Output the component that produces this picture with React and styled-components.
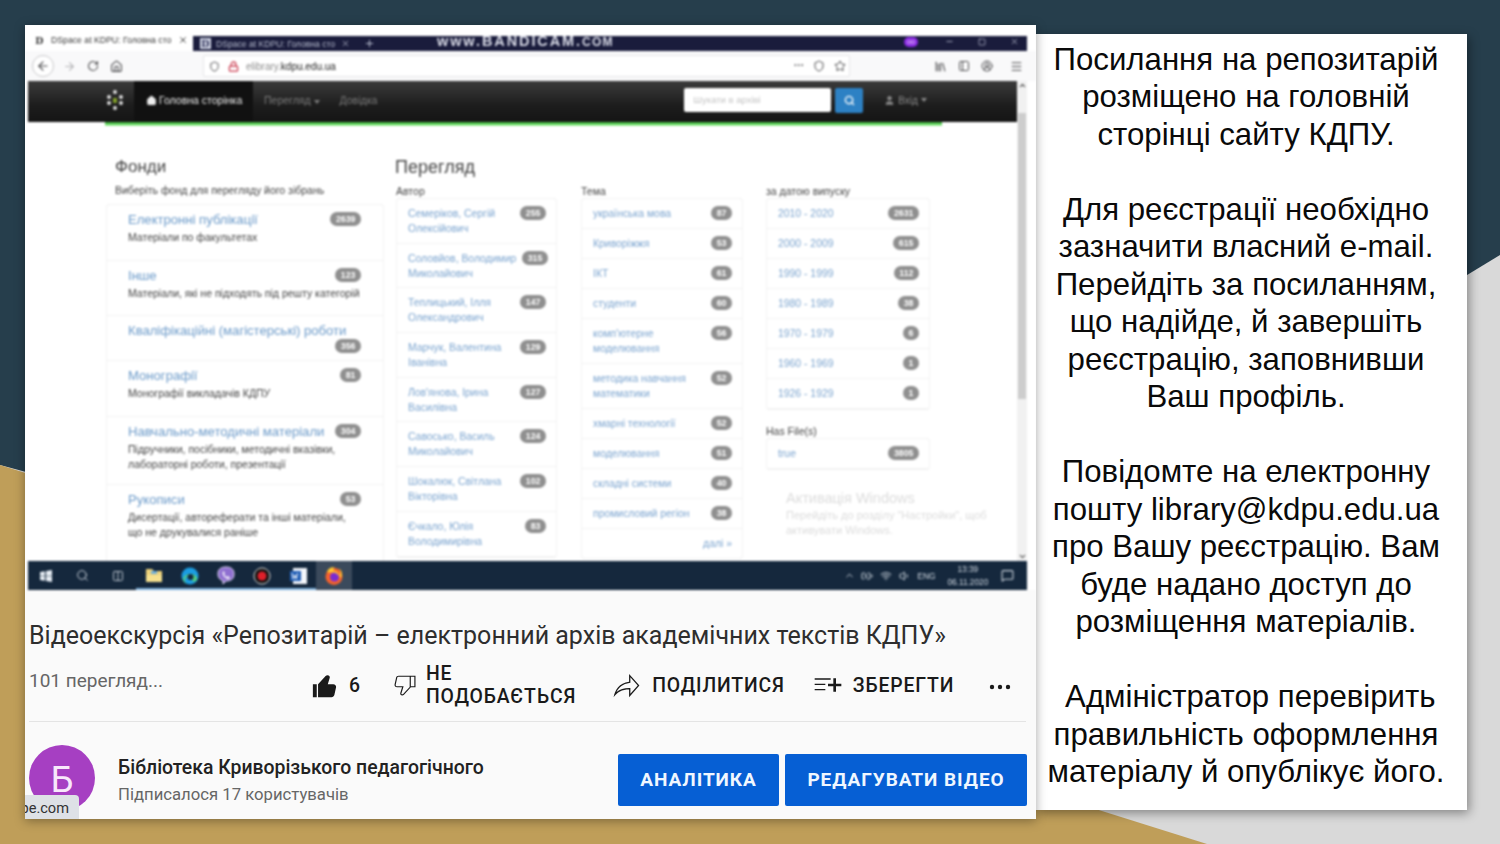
import React from "react";
import styled, { createGlobalStyle } from "styled-components";
import { ArrowLeft, ArrowRight, RotateCw, Home, Shield, Lock, Star, Search, User, X, Plus, Minus, Square, Menu, Library, PanelLeft, CircleUserRound, ChevronUp, ChevronDown, Wifi, Volume1, BatteryCharging, MessageSquare, Search as SearchSmall, Columns2 } from "lucide-react";

const Global = createGlobalStyle`
  html, body { margin: 0; padding: 0; width: 1500px; height: 844px; overflow: hidden; }
  * { box-sizing: border-box; }
`;

const Stage = styled.div`
  position: relative; width: 1500px; height: 844px; overflow: hidden; background: #d9d9d9;
`;
const Dark = styled.div`
  position: absolute; inset: 0; background: #263e4c;
  clip-path: polygon(0 0, 1500px 0, 1500px 255px, 800px 680px, 0 465px);
`;
const Gold = styled.div`
  position: absolute; inset: 0; background: #bf9e59;
  clip-path: polygon(0 465px, 1207px 844px, 0 844px);
`;
const Slide = styled.div`
  position: relative; display: flex; align-items: flex-start; padding: 25px 0 0 25px;
`;
const LeftCard = styled.div`
  position: relative; width: 1011px; height: 794px; background: #fafafa; overflow: hidden;
  box-shadow: 0 2px 10px rgba(0,0,0,.35);
`;
const RightCard = styled.div`
  width: 431px; height: 776px; margin-top: 9px; background: #fff; padding: 6.5px 11px 0 0;
  box-shadow: 2px 3px 10px rgba(0,0,0,.4);
  font: 31.2px/37.5px "Liberation Sans", Arial, sans-serif; color: #0a0a0a; text-align: center;
`;
const Para = styled.p`
  margin: 0 0 37.5px; white-space: pre;
`;

/* captured browser */
const Browser = styled.div`
  height: 565px; background: #fff; filter: blur(.8px);
  font-family: "Liberation Sans", Arial, sans-serif;
`;
const TabBar = styled.div`
  display: flex; height: 26px; background: #fff;
`;
const ActiveTab = styled.div`
  width: 168px; flex: none; display: flex; align-items: flex-end; gap: 6px; padding: 0 0 5px 9px;
  font-size: 8.7px; line-height: 11px; color: #222;
`;
const TabEdge = styled.div`
  flex: 1; margin-top: 11px; margin-right: 9px; height: 15px; background: #1a1c3c; color: #c5cadb;
  display: flex; align-items: center; font-size: 8.6px; padding-left: 7px;
`;
const Favicon = styled.span`
  width: 11px; height: 11px; display: flex; align-items: center; justify-content: center; flex: none;
  font: bold 11px/11px "Liberation Serif", serif; color: ${p => p.$light ? "#2b2e55" : "#2a2a2a"};
  background: ${p => p.$light ? "#cfd3e3" : "transparent"};
`;
const TabTitle = styled.span`
  flex: none; width: ${p => p.$w}px; margin-left: ${p => p.$ml || 0}px; white-space: nowrap; overflow: hidden; opacity: .9;
`;
const Banner = styled.span`
  align-self: flex-start; margin-left: 62px; width: 200px; flex: none; font: bold 14.5px/10px "Liberation Sans", sans-serif; letter-spacing: 1.9px; color: #d8dae6; white-space: nowrap;
`;
const BannerSmall = styled.span`
  font-size: 12px; letter-spacing: 1.3px;
`;
const WinControls = styled.div`
  margin: -4px 0 0 auto; display: flex; align-items: center; gap: 24px; padding-right: 8px;
`;
const Mask = styled.span`
  width: 14px; height: 10px; border-radius: 5px; background: #8a2be2; color: #f1d8ff; font-size: 7px; line-height: 10px; text-align: center; margin-right: 3px;
`;
const Toolbar = styled.div`
  height: 30px; display: flex; align-items: center; background: #f9f9fa; padding: 0 6px 0 7px; color: #4d4d4f;
`;
const BackBtn = styled.span`
  width: 22px; height: 22px; border: 1px solid #c9c9cb; border-radius: 50%; display: flex; align-items: center; justify-content: center; background: #fff;
`;
const NavIcon = styled.span`
  display: flex; width: 14px; justify-content: center; margin-left: ${p => p.$ml}px; color: ${p => p.$c || "inherit"};
`;
const UrlBar = styled.div`
  margin-left: 80px; width: 647px; height: 22px; background: #fff; border: 1px solid #e6e6e8; border-radius: 2px;
  display: flex; align-items: center; padding: 0 3px 0 3px;
`;
const UrlText = styled.span`
  margin-left: 6px; font-size: 10px; color: #8c8c8c;
`;
const UrlHost = styled.span` color: #222; `;
const UrlRight = styled.div`
  margin-left: auto; display: flex; align-items: center; gap: 9px;
`;
const Dots = styled.span` font: bold 10px/10px "Liberation Sans", sans-serif; letter-spacing: 0; `;
const ToolsRight = styled.div`
  margin-left: 84px; display: flex; align-items: center; gap: 11px;
`;
const Viewport = styled.div`
  display: flex; margin-left: 3px; height: 480px; background: #fff;
`;
const Page = styled.div`
  width: 989px; flex: none; position: relative; overflow: hidden;
`;
const DarkNav = styled.div`
  height: 41px; padding: 0 0 3px 77px; display: flex; align-items: center; color: #888;
  background: linear-gradient(#3b3b3b, #1d1d1d 60%, #151515); font-size: 10.5px;
`;
const Logo = styled.svg` flex: none; width: 20px; height: 20px; `;
const NavActive = styled.div`
  align-self: flex-start; margin-left: 9px; width: 119px; height: 41px; flex: none; display: flex; align-items: center; gap: 2px; padding: 0 0 3px 12px;
  background: #111; color: #eee; font-size: 10.5px; white-space: nowrap;
`;
const NavItem = styled.div`
  margin-left: ${p => p.$ml}px; white-space: nowrap; color: #7b7b7b;
`;
const SearchBox = styled.div`
  margin-left: 307px; width: 147px; height: 24px; background: #fff; border-radius: 2px; padding-left: 9px;
  font-size: 9.5px; line-height: 24px; color: #c4c4c4;
`;
const SearchBtn = styled.div`
  margin-left: 4px; width: 28px; height: 25px; border-radius: 2px; background: #2d81c4; color: #fff; display: flex; align-items: center; justify-content: center;
`;
const UserMenu = styled.div`
  margin-left: 21px; display: flex; align-items: center; gap: 3px; color: #8a8a8a; font-size: 10px; white-space: nowrap;
`;
const GreenLine = styled.div`
  margin-left: 77px; width: 837px; height: 4px; background: linear-gradient(#3f9e3f, #62e05c 60%, #cdf3ca);
`;
const Content = styled.div`
  display: flex; gap: 11px; padding: 31px 0 0 78px; position: relative;
`;
const FundCol = styled.div` width: 278px; flex: none; `;
const H2 = styled.h2`
  margin: 0 0 0 ${p => p.$ml || 0}px; font: 400 ${p => p.$fs || 17}px/20px "Liberation Sans", sans-serif; color: #444;
`;
const Lead = styled.div`
  margin: 6px 0 7px 9px; font-size: 10.5px; line-height: 14px; color: #444; white-space: nowrap;
`;
const List = styled.div`
  border: 1px solid #f2f2f2; border-radius: 3px; background: #fff;
`;
const FundRow = styled.div`
  min-height: ${p => p.$h}px; padding: 7px 22px 0 21px; border-bottom: 1px solid #f2f2f2;
`;
const FundHead = styled.div`
  display: flex; flex-wrap: wrap; justify-content: space-between; align-items: flex-start;
`;
const FundTitle = styled.span`
  font-size: 13.1px; line-height: 16px; color: #6b9ac9;
`;
const FundSub = styled.div`
  margin-top: 2px; font-size: 10.5px; line-height: 15px; color: #444; white-space: nowrap;
`;
const Badge = styled.span`
  flex: none; margin-left: auto; height: 14px; min-width: 14px; padding: 0 5.5px; border-radius: 7px; background: #8f8f8f; color: #fff;
  font: bold 8.8px/14px "Liberation Sans", sans-serif; text-align: center;
`;
const BrowseCol = styled.div` flex: none; `;
const BrowseGrid = styled.div`
  margin-top: 7px; display: grid; grid-template-columns: 161px 163px 164px; column-gap: 23px; padding-left: 1px;
`;
const TopicCol = styled.div` margin-left: 1px; `;
const Label = styled.div`
  font-size: 10.5px; line-height: 14px; color: #444; margin-top: ${p => p.$mt || 0}px; white-space: nowrap;
`;
const Row = styled.div`
  display: flex; justify-content: space-between; align-items: flex-start; gap: 6px;
  padding: ${p => p.$pad || 7}px 10px ${p => p.$pad || 7}px 11px; border-bottom: 1px solid #f2f2f2;
  font-size: 10.4px; line-height: 15px; color: #7ba4cf; white-space: nowrap;
`;
const More = styled.div`
  padding: 7px 10px; text-align: right; font-size: 10.4px; line-height: 15px; color: #7ba4cf;
`;
const Watermark = styled.div`
  position: absolute; left: 758px; top: 363px; width: 225px; color: #dcdcdc; font-size: 11px; line-height: 15px; white-space: nowrap;
`;
const WmTitle = styled.div` font-size: 14.5px; line-height: 19px; `;
const Scroll = styled.div`
  width: 10px; margin-left: 0; background: #f1f1f1; display: flex; flex-direction: column; align-items: center; color: #555;
`;
const ScrollThumb = styled.div`
  width: 8px; height: 286px; margin-top: 22px; background: #cdcdcd;
`;
const ScrollEnd = styled.div` margin-top: auto; display: flex; `;
const ScrollTop = styled.div` display: flex; height: 10px; margin-top: 0; `;
const Taskbar = styled.div`
  margin: 0 9px 0 3px; height: 29px; background: #15283d; display: flex; align-items: center; position: relative;
`;
const TaskBtn = styled.span`
  width: 36px; height: 29px; display: flex; align-items: center; justify-content: center; flex: none; color: #dfe6ee;
  background: ${p => p.$on ? "#3b4a5c" : "transparent"};
  box-shadow: ${p => p.$mark ? "inset 0 -2px 0 #7fb2dd" : "none"};
`;
const Tray = styled.div`
  margin-left: auto; display: flex; align-items: center; gap: 6.7px; padding-right: 13px; color: #cfd7e0; font-size: 8.5px;
`;
const TrayLang = styled.span``;
const Clock = styled.div` margin-left: 5px; margin-right: 6px; text-align: center; font-size: 8.3px; line-height: 13px; `;

/* video details */
const Details = styled.div`
  height: 229px; padding: 31px 0 0 4px; font-family: Roboto, "Liberation Sans", sans-serif;
`;
const VideoTitle = styled.h1`
  margin: 0; font: 400 25px/30px Roboto, sans-serif; color: #2e2e2e; white-space: nowrap;
`;
const ActionBar = styled.div`
  height: 66px; margin-top: 5px; display: flex; align-items: center; border-bottom: 1px solid #e4e4e4; margin-right: 10px; padding-bottom: 7px;
`;
const Views = styled.span`
  width: 280px; flex: none; font-size: 19px; line-height: 24px; color: #666; margin-bottom: 9px; white-space: nowrap;
`;
const Action = styled.div`
  display: flex; align-items: center; flex: none; margin-left: ${p => p.$ml || 0}px; font: 500 19.4px/23px Roboto, sans-serif; color: #1a1a1a; letter-spacing: .85px; gap: ${p => p.$gap || 11}px; white-space: pre;
`;
const Channel = styled.div`
  display: flex; align-items: flex-start; padding: 23px 0 0 4px; position: relative; margin-left: -4px;
`;
const Avatar = styled.div`
  width: 66px; height: 66px; flex: none; border-radius: 50%; background: #a63fc2; color: #f8e8fb; display: flex; align-items: center; justify-content: center;
  font: 400 36px/40px Roboto, sans-serif; padding-top: 4px;
`;
const ChannelInfo = styled.div` margin-left: 23px; padding-top: 10px; width: 400px; flex: none; `;
const ChannelName = styled.div` font: 500 19.4px/26px Roboto, sans-serif; color: #222; white-space: nowrap; `;
const ChannelSubs = styled.div` margin-top: 2px; font-size: 16.7px; line-height: 24px; color: #666; white-space: nowrap; `;
const CTA = styled.button`
  flex: none; border: 0; height: 52px; width: ${p => p.$w}px; margin-left: ${p => p.$ml}px; margin-top: 9px; border-radius: 2px; background: #065fd4; color: #f0f7ff;
  font: 700 19px/52px Roboto, sans-serif; letter-spacing: .95px; padding: 0;
`;
const UrlTip = styled.div`
  position: absolute; left: 0; bottom: 0; width: 54px; height: 24px; background: #dee1e6; border-top-right-radius: 4px;
  font: 14.6px/26px Roboto, sans-serif; color: #333; display: flex; justify-content: flex-end; padding-right: 10px; overflow: hidden; white-space: nowrap;
`;
const Ellipsis = styled.svg` display: block; width: 22px; height: 6px; margin-top: 4px; fill: #1a1a1a; `;

const funds = [
  { t: "Електронні публікації", b: 2639, s: ["Матеріали по факультетах"], h: 56 },
  { t: "Інше", b: 123, s: ["Матеріали, які не підходять під решту категорій"], h: 55 },
  { t: "Кваліфікаційні (магістерські) роботи", b: 356, s: [], h: 45 },
  { t: "Монографії", b: 81, s: ["Монографії викладачів КДПУ"], h: 56 },
  { t: "Навчально-методичні матеріали", b: 304, s: ["Підручники, посібники, методичні вказівки,", "лабораторні роботи, презентації"], h: 68 },
  { t: "Рукописи", b: 53, s: ["Дисертації, автореферати та інші матеріали,", "що не друкувалися раніше"], h: 80 },
];
const authors = [
  ["Семеріков, Сергій", "Олексійович", 255], ["Соловйов, Володимир", "Миколайович", 315],
  ["Теплицький, Ілля", "Олександрович", 147], ["Марчук, Валентина", "Іванівна", 129],
  ["Лов'янова, Ірина", "Василівна", 127], ["Савосько, Василь", "Миколайович", 124],
  ["Шокалюк, Світлана", "Вікторівна", 102], ["Єчкало, Юлія", "Володимирівна", 83],
];
const topics = [
  ["українська мова", null, 87], ["Криворіжжя", null, 53], ["ІКТ", null, 61], ["студенти", null, 60],
  ["комп'ютерне", "моделювання", 56], ["методика навчання", "математики", 52], ["хмарні технології", null, 52],
  ["моделювання", null, 51], ["складні системи", null, 40], ["промисловий регіон", null, 38],
];
const dates = [["2010 - 2020", 2631], ["2000 - 2009", 615], ["1990 - 1999", 112], ["1980 - 1989", 38], ["1970 - 1979", 6], ["1960 - 1969", 1], ["1926 - 1929", 1]];

const paragraphs = [
  ["Посилання на репозитарій", "розміщено на головній", "сторінці сайту КДПУ."],
  ["Для реєстрації необхідно", "зазначити власний e-mail.", "Перейдіть за посиланням,", "що надійде, й завершіть", "реєстрацію, заповнивши", "Ваш профіль."],
  ["Повідомте на електронну", "пошту library@kdpu.edu.ua", "про Вашу реєстрацію. Вам", "буде надано доступ до", "розміщення матеріалів."],
  [" Адміністратор перевірить", "правильність оформлення", "матеріалу й опублікує його."],
];

const Yt = ({ d, size = 28, fill = "currentColor" }) => (
  <svg width={size} height={size} viewBox="0 0 24 24" fill={fill}><path d={d} /></svg>
);
const THUMB = "M3,11h3v10H3V11z M18.77,11h-4.23l1.52-4.94C16.38,5.03,15.54,4,14.38,4c-0.58,0-1.14,0.24-1.52,0.65L7,11v10h10.43c1.06,0,1.98-0.67,2.19-1.61l1.34-6C21.23,12.15,20.18,11,18.77,11z";
const DISLIKE = "M17,4h-1H6.57C5.5,4,4.59,4.67,4.38,5.61l-1.34,6C2.77,12.85,3.82,14,5.23,14h4.23l-1.52,4.94C7.62,19.97,8.46,21,9.62,21c0.58,0,1.14-0.24,1.52-0.65L17,14h4V4H17z M10.4,19.67C10.21,19.88,9.92,20,9.62,20c-0.26,0-0.5-0.11-0.63-0.3c-0.07-0.1-0.15-0.26-0.09-0.47l1.52-4.94l0.4-1.29H9.46H5.23c-0.41,0-0.8-0.17-1.03-0.46c-0.12-0.15-0.25-0.4-0.18-0.72l1.34-6C5.46,5.35,5.97,5,6.57,5H16v8.61L10.4,19.67z M20,13h-3V5h3V13z";
const SHARE = "M15,5.63L20.66,12L15,18.37V15v-1h-1c-3.96,0-7.14,1-9.75,3.09c1.84-4.07,5.11-6.4,9.89-7.1L15,9.86V9V5.63 M14,3v6C6.22,10.13,3.11,15.33,2,21c2.78-3.97,6.44-6,12-6v6l8-9L14,3L14,3z";
const SAVE = "M22,13h-4v4h-2v-4h-4v-2h4V7h2v4h4V13z M14,7H2v1h12V7z M2,12h8v-1H2V12z M2,16h8v-1H2V16z";

const Caret = () => <svg width="6" height="4" viewBox="0 0 6 4"><path d="M0 0h6L3 4z" fill="currentColor" /></svg>;

const DSpaceLogo = () => (
  <Logo viewBox="0 0 20 20">
    <rect x="8" y="8" width="4" height="5" fill="#7f9b2a" />
    {[[10, 2], [4, 7], [16, 7], [4, 13], [16, 13], [10, 18]].map(([x, y]) => (
      <circle key={x + "-" + y} cx={x} cy={y} r="1.9" fill="#e8e8e8" />
    ))}
  </Logo>
);

const icons = {
  win: <svg width="12" height="12" viewBox="0 0 12 12" fill="#e8eef5"><path d="M0 2l5-.7v4.4H0zM6 1.100 12 0v5.700H6zM0 6.300h5v4.400L0 10zM6 6.300h6V12l-6-1z" /></svg>,
  search: <SearchSmall size={13} strokeWidth={1.6} />,
  task: <Columns2 size={12} strokeWidth={1.6} />,
  files: <svg width="18" height="15" viewBox="0 0 18 15"><path d="M1 1h6l2 2h8v11H1z" fill="#eed27a" /><rect x="1" y="7" width="16" height="7" fill="#f6e08e" /><rect x="6" y="3" width="6" height="3" fill="#6fb0dc" /></svg>,
  edge: <svg width="18" height="18" viewBox="0 0 18 18"><circle cx="9" cy="9" r="8.500" fill="#1b9de2" /><path d="M2 12c2-6 12-7 14-1 1 3-3 4-5 3 2-3-2-6-5-4-3 1-3 5 0 7-2-.5-3.600-2.500-4-5z" fill="#56d07f" /><circle cx="9.500" cy="10" r="3" fill="#15283d" /></svg>,
  viber: <svg width="18" height="19" viewBox="0 0 18 19"><path d="M9 1c5 0 8 2 8 7s-3 7-8 7l-3 3v-3.300C3 13.500 1 12 1 8c0-5 3-7 8-7z" fill="#8f6fd0" stroke="#e6dcfa" strokeWidth="1" /><path d="M6 5l2 2-1 1c.5 1.500 1.500 2.500 3 3l1-1 2 2c-1 1.500-3 1-5-.5S5 7 6 5z" fill="#fff" /></svg>,
  rec: <svg width="18" height="18" viewBox="0 0 18 18"><circle cx="9" cy="9" r="8" fill="#111" stroke="#ddd" /><circle cx="9" cy="9" r="4.500" fill="#e0202a" /></svg>,
  word: <svg width="17" height="16" viewBox="0 0 17 16"><rect x="3" y="0" width="14" height="16" fill="#f3f6fb" /><rect x="0" y="3" width="11" height="10" fill="#1f5db5" /><path d="M2 5l1.300 6 1.500-4 1.500 4L7.500 5" fill="none" stroke="#fff" strokeWidth="1" /></svg>,
  fox: <svg width="20" height="20" viewBox="0 0 20 20"><circle cx="10" cy="10.500" r="8.500" fill="#f6622b" /><circle cx="10.500" cy="11" r="4.500" fill="#7a2bd2" /><path d="M3 6c1-4 6-6 8-4-2 0-2 2-1 3 3 0 5 2 5 5 3-3 1-7-1-8 4 2 5 6 3 10L12 7C9 6 5 7 3 6z" fill="#ffc531" /></svg>,
};

export default function App() {
  return (
    <Stage>
      <Global />
      <Dark />
      <Gold />
      <Slide>
        <LeftCard>
          <Browser>
            <TabBar>
              <ActiveTab>
                <Favicon>D</Favicon>
                <TabTitle $w={121}>DSpace at KDPU: Головна сто</TabTitle>
                <X size={10} strokeWidth={2} style={{ marginBottom: 1 }} />
              </ActiveTab>
              <TabEdge>
                <Favicon $light>D</Favicon>
                <TabTitle $w={120} $ml={5}>DSpace at KDPU: Головна сто</TabTitle>
                <X size={9} style={{ marginLeft: 5 }} />
                <Plus size={11} style={{ marginLeft: 14 }} />
                <Banner>www.BANDICAM.<BannerSmall>COM</BannerSmall></Banner>
                <WinControls>
                  <Mask>oo</Mask>
                  <Minus size={9} />
                  <Square size={8} />
                  <X size={9} />
                </WinControls>
              </TabEdge>
            </TabBar>
            <Toolbar>
              <BackBtn><ArrowLeft size={14} strokeWidth={2} /></BackBtn>
              <NavIcon $ml={8} $c="#b4b4b6"><ArrowRight size={13} /></NavIcon>
              <NavIcon $ml={10}><RotateCw size={12} strokeWidth={2.2} /></NavIcon>
              <NavIcon $ml={9}><Home size={13} strokeWidth={2} /></NavIcon>
              <UrlBar>
                <NavIcon $ml={0}><Shield size={11} strokeWidth={2} /></NavIcon>
                <NavIcon $ml={5} $c="#c9364b"><Lock size={11} strokeWidth={2.6} /></NavIcon>
                <UrlText>elibrary.<UrlHost>kdpu.edu.ua</UrlHost></UrlText>
                <UrlRight>
                  <Dots>···</Dots>
                  <Shield size={12} strokeWidth={2} />
                  <Star size={12} strokeWidth={2} />
                </UrlRight>
              </UrlBar>
              <ToolsRight>
                <Library size={13} />
                <PanelLeft size={12} />
                <CircleUserRound size={12} />
                <Menu size={13} style={{ marginLeft: 6 }} />
              </ToolsRight>
            </Toolbar>
            <Viewport>
              <Page>
                <DarkNav>
                  <DSpaceLogo />
                  <NavActive><Home size={11} fill="#eee" strokeWidth={1} />Головна сторінка</NavActive>
                  <NavItem $ml={11}>Перегляд <Caret /></NavItem>
                  <NavItem $ml={20}>Довідка</NavItem>
                  <SearchBox>Шукати в архіві</SearchBox>
                  <SearchBtn><Search size={11} strokeWidth={3} /></SearchBtn>
                  <UserMenu><User size={11} fill="currentColor" />Вхід <Caret /></UserMenu>
                </DarkNav>
                <GreenLine />
                <Content>
                  <FundCol>
                    <H2 $ml={9}>Фонди</H2>
                    <Lead>Виберіть фонд для перегляду його зібрань</Lead>
                    <List>
                      {funds.map(f => (
                        <FundRow key={f.t} $h={f.h}>
                          <FundHead>
                            <FundTitle>{f.t}</FundTitle>
                            <Badge>{f.b}</Badge>
                          </FundHead>
                          {f.s.length > 0 && <FundSub>{f.s.map(l => <div key={l}>{l}</div>)}</FundSub>}
                        </FundRow>
                      ))}
                    </List>
                  </FundCol>
                  <BrowseCol>
                    <H2 $fs={18}>Перегляд</H2>
                    <BrowseGrid>
                      <div>
                        <Label>Автор</Label>
                        <List>
                          {authors.map(([a, b, n]) => (
                            <Row key={a} $pad={6.85}><span>{a}<br />{b}</span><Badge>{n}</Badge></Row>
                          ))}
                        </List>
                      </div>
                      <TopicCol>
                        <Label>Тема</Label>
                        <List>
                          {topics.map(([a, b, n]) => (
                            <Row key={a}><span>{a}{b && <><br />{b}</>}</span><Badge>{n}</Badge></Row>
                          ))}
                          <More>далі »</More>
                        </List>
                      </TopicCol>
                      <div>
                        <Label>за датою випуску</Label>
                        <List>
                          {dates.map(([a, n]) => <Row key={a}><span>{a}</span><Badge>{n}</Badge></Row>)}
                        </List>
                        <Label $mt={14}>Has File(s)</Label>
                        <List>
                          <Row><span>true</span><Badge>3805</Badge></Row>
                        </List>
                      </div>
                    </BrowseGrid>
                  </BrowseCol>
                  <Watermark>
                    <WmTitle>Активація Windows</WmTitle>
                    Перейдіть до розділу "Настройки", щоб<br />активувати Windows.
                  </Watermark>
                </Content>
              </Page>
              <Scroll>
                <ScrollTop><ChevronUp size={9} strokeWidth={3} /></ScrollTop>
                <ScrollThumb />
                <ScrollEnd><ChevronDown size={9} strokeWidth={3} /></ScrollEnd>
              </Scroll>
            </Viewport>
            <Taskbar>
              <TaskBtn>{icons.win}</TaskBtn>
              <TaskBtn>{icons.search}</TaskBtn>
              <TaskBtn>{icons.task}</TaskBtn>
              <TaskBtn $mark>{icons.files}</TaskBtn>
              <TaskBtn $mark>{icons.edge}</TaskBtn>
              <TaskBtn $mark>{icons.viber}</TaskBtn>
              <TaskBtn $mark>{icons.rec}</TaskBtn>
              <TaskBtn $mark>{icons.word}</TaskBtn>
              <TaskBtn $on>{icons.fox}</TaskBtn>
              <Tray>
                <ChevronUp size={11} />
                <BatteryCharging size={12} />
                <Wifi size={12} />
                <Volume1 size={12} />
                <TrayLang>ENG</TrayLang>
                <Clock>13:39<br />06.11.2020</Clock>
                <MessageSquare size={13} />
              </Tray>
            </Taskbar>
          </Browser>
          <Details>
            <VideoTitle>Відеоекскурсія «Репозитарій – електронний архів академічних текстів КДПУ»</VideoTitle>
            <ActionBar>
              <Views>101 перегляд...</Views>
              <Action $gap={9}><Yt d={THUMB} size={31} />6</Action>
              <Action $ml={30} $gap={7}><Yt d={DISLIKE} size={28} />{"НЕ\nПОДОБАЄТЬСЯ"}</Action>
              <Action $ml={35} $gap={10}><Yt d={SHARE} size={31} />ПОДІЛИТИСЯ</Action>
              <Action $ml={27} $gap={9}><Yt d={SAVE} size={32} />ЗБЕРЕГТИ</Action>
              <Action $ml={35}>
                <Ellipsis viewBox="0 0 22 6"><circle cx="3" cy="3" r="2.200" /><circle cx="11" cy="3" r="2.200" /><circle cx="19" cy="3" r="2.200" /></Ellipsis>
              </Action>
            </ActionBar>
            <Channel>
              <Avatar>Б</Avatar>
              <ChannelInfo>
                <ChannelName>Бібліотека Криворізького педагогічного</ChannelName>
                <ChannelSubs>Підписалося 17 користувачів</ChannelSubs>
              </ChannelInfo>
              <CTA $w={161} $ml={100}>АНАЛІТИКА</CTA>
              <CTA $w={242} $ml={6}>РЕДАГУВАТИ ВІДЕО</CTA>
            </Channel>
          </Details>
          <UrlTip>be.com</UrlTip>
        </LeftCard>
        <RightCard>
          {paragraphs.map(p => (
            <Para key={p[0]}>{p.map(l => l + "\n")}</Para>
          ))}
        </RightCard>
      </Slide>
    </Stage>
  );
}
